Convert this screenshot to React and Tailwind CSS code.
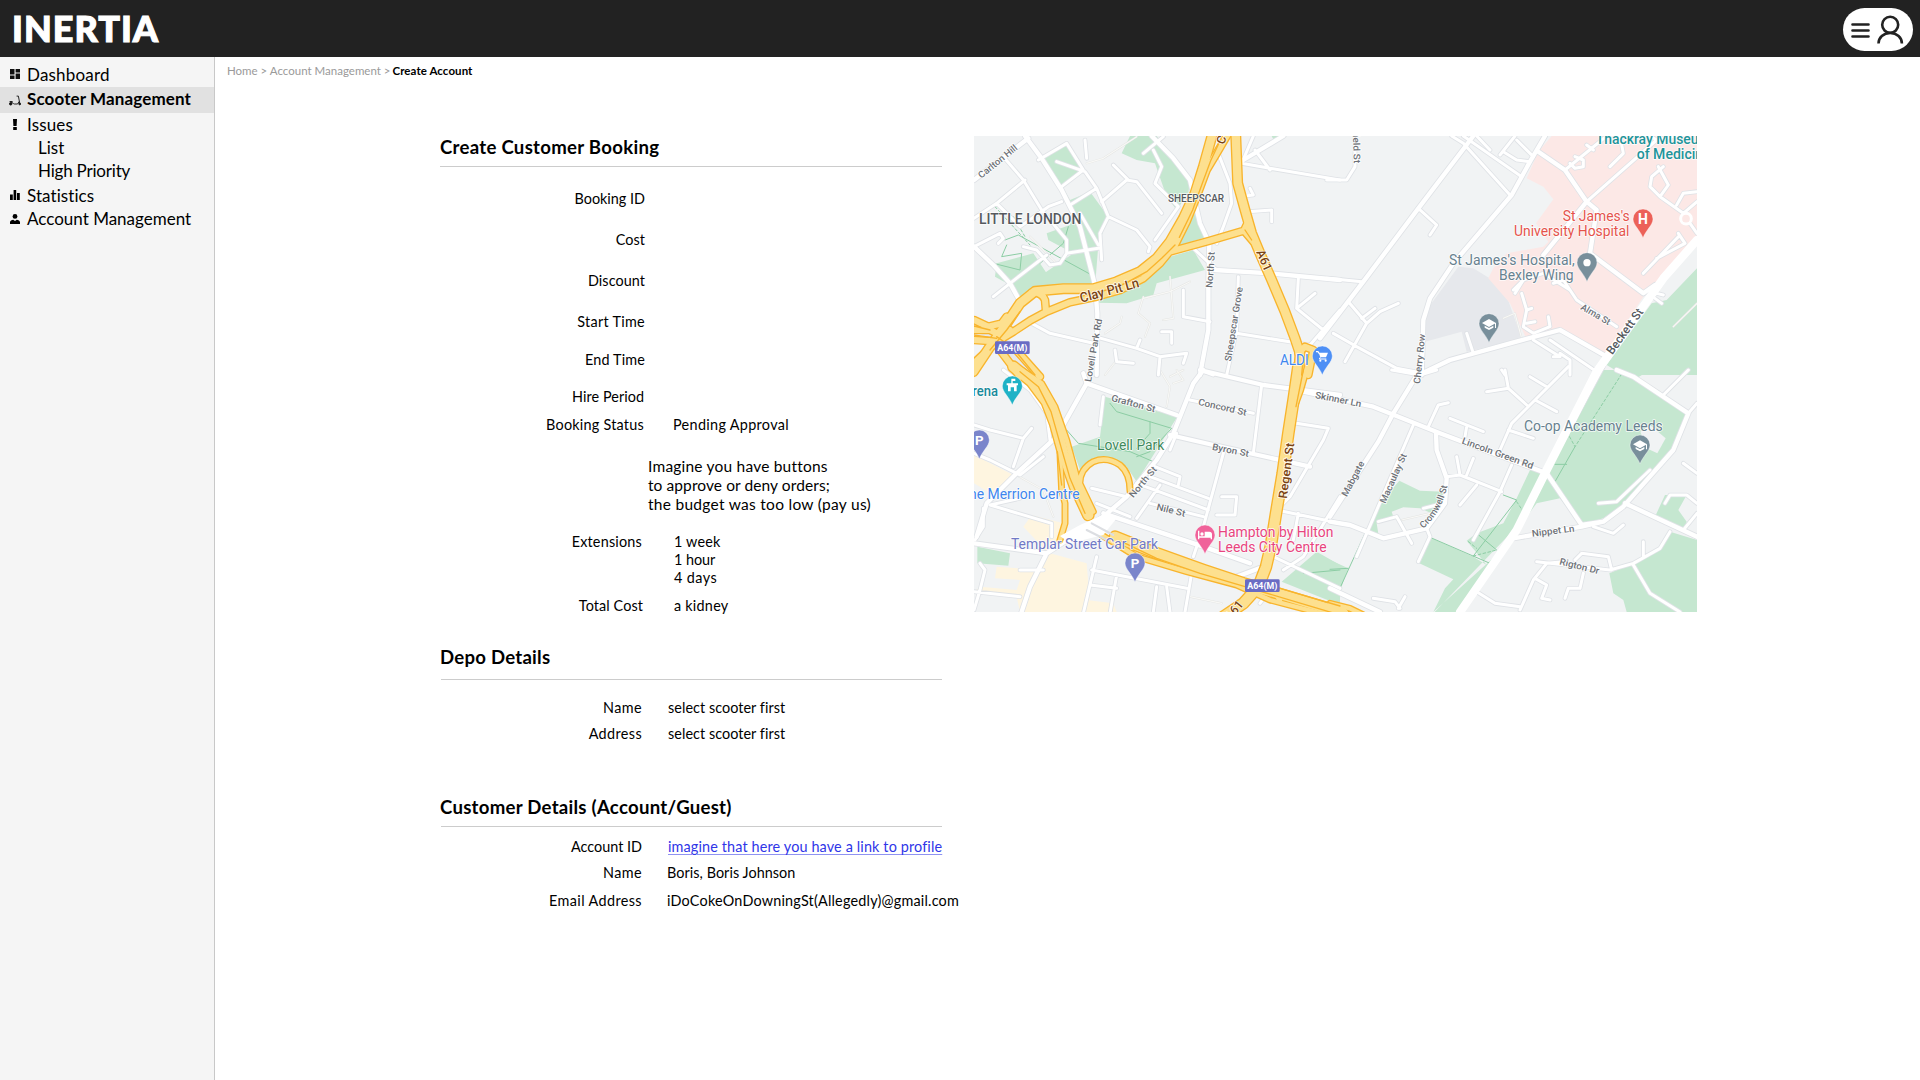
import React from "react";

const NAV_TEXT = "font-[Lato,sans-serif] text-[17px] leading-none text-black";

function DashboardIcon() {
  return (
    <svg viewBox="0 0 10 10" className="h-[10px] w-[10px]" fill="#111">
      <path d="M0 0h4.5v5.4H0zM0 6.4h4.5V10H0zM5.6 0H10v3.4H5.6zM5.6 4.5H10V10H5.6z" />
    </svg>
  );
}

function ScooterIcon() {
  return (
    <svg viewBox="0 0 12 11" className="h-[11px] w-[12px]" fill="none" stroke="#111">
      <path d="M7.6 1.1h1.8l1.3 7" strokeWidth="0.9" />
      <path d="M2 7.2c2 0 2 1.8 3.4 1.8h3.2l1.6-2.6" strokeWidth="0.9" />
      <circle cx="1.7" cy="8.8" r="1.2" fill="#111" />
      <circle cx="10.7" cy="8.9" r="0.9" fill="#111" />
      <path d="M0.6 6.6h3" strokeWidth="1" />
    </svg>
  );
}

function AlertIcon() {
  return (
    <svg viewBox="0 0 4 11" className="h-[11px] w-[4px]" fill="#000">
      <path d="M0 0h4l-.4 7H.4zM.2 8h3.6v3H.2z" />
    </svg>
  );
}

function StatsIcon() {
  return (
    <svg viewBox="0 0 10 10" className="h-[10px] w-[10px]" fill="#000">
      <path d="M0 4.4h2.8V10H0zM3.6 0h2.6v10H3.6zM7 3h2.8v7H7z" />
    </svg>
  );
}

function PersonIcon() {
  return (
    <svg viewBox="0 0 10 10" className="h-[10px] w-[10px]" fill="#000">
      <circle cx="5" cy="2.4" r="2.4" />
      <path d="M0 10V8.2C0 6.6 1.8 6 3.2 5.8L5 7l1.8-1.2C8.2 6 10 6.6 10 8.2V10z" />
    </svg>
  );
}

const nav = [
  { label: "Dashboard", icon: DashboardIcon, row: "h-[28px] pt-[2px]", text: "tracking-[0.2px]" },
  { label: "Scooter Management", icon: ScooterIcon, row: "h-[26px] bg-[#e1e1e1]", text: "pb-[3px] font-bold tracking-[0.12px]" },
  { label: "Issues", icon: AlertIcon, row: "h-[22px]", text: "tracking-[0.15px]" },
  { label: "List", row: "h-[23px] pt-[2px]", text: "ml-[13px]" },
  { label: "High Priority", row: "h-[23px] pt-[2px]", text: "ml-[13px] tracking-[-0.2px]" },
  { label: "Statistics", icon: StatsIcon, row: "h-[26px] pt-[2px]", text: "tracking-[0.08px]" },
  { label: "Account Management", icon: PersonIcon, row: "h-[21px] pt-[2px]", text: "" },
];

function Sidebar() {
  return (
    <nav className="w-[215px] shrink-0 border-r border-[#c8c8c8] bg-[#f5f5f5] pt-[2px]">
      {nav.map(({ label, icon: Icon, row, text }) => (
        <div key={label} className={`flex items-center ${row}`}>
          <span className="ml-[5px] flex w-[20px] shrink-0 justify-center">{Icon && <Icon />}</span>
          <span className={`ml-[2px] whitespace-nowrap ${NAV_TEXT} ${text}`}>{label}</span>
        </div>
      ))}
    </nav>
  );
}

function Header() {
  return (
    <header className="flex h-[57px] shrink-0 items-center justify-between bg-[#222222] pl-[12px] pr-[7px]">
      <span className="pb-[2px] font-[Lato,sans-serif] text-[36px] leading-none font-black tracking-[1px] text-white [-webkit-text-stroke:1.1px_white]">INERTIA</span>
      <div className="mt-[2px] flex h-[43px] w-[70px] items-center rounded-full bg-white pl-[8px]">
        <svg viewBox="0 0 53 30" className="h-[30px] w-[53px]" fill="none" stroke="#222">
          <path d="M1.5 9.500h16M1.5 15.500h16M1.5 21.500h16" strokeWidth="2.6" strokeLinecap="round" />
          <circle cx="39.2" cy="9.8" r="8" strokeWidth="2.6" />
          <path d="M27.5 28.6c0-6 5-10.6 11.7-10.6s11.7 4.6 11.7 10.6" strokeWidth="2.6" />
        </svg>
      </div>
    </header>
  );
}

function SectionTitle({ children, className }) {
  return <h2 className={`h-6 text-[18.6px] leading-[25px] font-bold whitespace-nowrap ${className}`}>{children}</h2>;
}

function Rule({ className }) {
  return <div className={`h-px bg-[#cccccc] ${className}`} />;
}

function Row({ label, children, top, labelWidth = "w-[202px]", labelText = "", gap = "ml-[26px]", value = "" }) {
  return (
    <div className={`flex text-[14.4px] ${top}`}>
      <span className={`shrink-0 text-right leading-5 whitespace-nowrap ${labelWidth} ${labelText}`}>{label}</span>
      {children && <span className={`whitespace-nowrap ${gap} ${value || "leading-5 tracking-[0.05px]"}`}>{children}</span>}
    </div>
  );
}

function BookingForm() {
  return (
    <section className="w-[502px] shrink-0 text-black">
      <SectionTitle className="tracking-[0.28px]">Create Customer Booking</SectionTitle>
      <Rule className="mt-[7px]" />
      <Row label="Booking ID" top="mt-[22px]" labelWidth="w-[205px]" />
      <Row label="Cost" top="mt-[21px]" labelWidth="w-[205px]" labelText="tracking-[0.07px]" />
      <Row label="Discount" top="mt-[21px]" labelWidth="w-[205px]" labelText="tracking-[0.07px]" />
      <Row label="Start Time" top="mt-[21px]" labelWidth="w-[205px]" labelText="tracking-[0.3px]" />
      <Row label="End Time" top="mt-[18px]" labelWidth="w-[205px]" labelText="tracking-[0.16px]" />
      <Row label="Hire Period" top="mt-[17px]" labelWidth="w-[204px]" labelText="tracking-[0.05px]" />
      <Row label="Booking Status" top="mt-[8px]" labelWidth="w-[204px]" labelText="tracking-[0.24px]" gap="ml-[29px]" value="leading-5 tracking-[0.33px]">
        Pending Approval
      </Row>
      <div className="mt-[22px] ml-[207px] text-[15.5px] leading-[19px] whitespace-nowrap">
        <p className="pl-px tracking-[0.21px]">Imagine you have buttons</p>
        <p className="pl-px tracking-[0.09px]">to approve or deny orders;</p>
        <p className="pl-px tracking-[0.28px]">the budget was too low (pay us)</p>
      </div>
      <Row label="Extensions" top="mt-[19px]" labelText="tracking-[0.2px] mt-[-1px]" gap="ml-[32px]" value="leading-[18px]">
        <span className="block tracking-[0.15px]">1 week</span>
        <span className="block tracking-[-0.05px]">1 hour</span>
        <span className="block tracking-[0.42px]">4 days</span>
      </Row>
      <Row label="Total Cost" top="mt-[9px]" labelWidth="w-[203px]" labelText="tracking-[0.1px]" gap="ml-[31px]" value="leading-5 tracking-[0.24px]">
        a kidney
      </Row>

      <SectionTitle className="mt-[29px] tracking-[0.24px]">Depo Details</SectionTitle>
      <Rule className="mt-[10px] ml-px" />
      <Row label="Name" top="mt-[18px]" labelText="tracking-[0.41px]">select scooter first</Row>
      <Row label="Address" top="mt-[6px]" labelText="tracking-[0.38px]">select scooter first</Row>

      <SectionTitle className="mt-[51px] tracking-[0.26px]">Customer Details (Account/Guest)</SectionTitle>
      <Rule className="mt-[7px] ml-px" />
      <Row label="Account ID" top="mt-[10px]" value="leading-5 tracking-[0.14px]">
        <a href="#profile" className="text-[#2f36e8] underline decoration-[#8f93f2] underline-offset-2">imagine that here you have a link to profile</a>
      </Row>
      <Row label="Name" top="mt-[6px]" labelText="tracking-[0.41px]" gap="ml-[25px]" value="leading-5 tracking-[0.06px]">
        Boris, Boris Johnson
      </Row>
      <Row label="Email Address" top="mt-[8px]" labelText="tracking-[0.39px]" gap="ml-[25px]" value="leading-5 tracking-[0.2px]">
        iDoCokeOnDowningSt(Allegedly)@gmail.com
      </Row>
    </section>
  );
}

/* Map geometry, one entry per quarter: north-west, north-east, south-west, south-east. */
const OFFSETS = ["translate(0 0)", "translate(1080 0)", "translate(0 720)", "translate(1080 720)"];

const GREEN = [
  "M215 85L290 40L345 120L270 175ZM275 165L300 210L360 185L415 260L385 345L375 470L140 500L125 465L215 435L310 370L235 330L230 310L300 285L310 240ZM80 400L190 370L230 430L130 470L75 440ZM480 18L560 18L660 150L655 190L620 240L590 200L555 100L500 90L455 70ZM670 245L710 320L620 350ZM600 380L670 360L705 420L560 460L550 495L470 520L375 518L400 490L520 450ZM905 18L950 18L915 38Z",
  "M1101 415L1010 510L965 520L830 705L880 735L1101 735Z",
  "M405 80L622 140L500 335L470 290L410 262L330 300L305 230L390 200ZM22 530L120 550L115 587L22 580ZM935 635L1040 545L1110 585L1110 705Z",
  "M815 0L960 0L920 25L1075 130L1025 240L880 405L820 445L750 465L690 385L620 400L590 440L310 730L395 726L560 500L310 726L345 655L370 628L268 580L298 502L430 560L470 585L410 512L440 490L520 460L560 385L600 300L650 310L725 150ZM208 332L270 362L345 365L330 400L310 432L270 415L220 412L185 425L190 440L140 460L148 510L110 490L150 400ZM1020 485L1101 510L1101 726L890 726L880 690L850 670L838 610L910 580L980 540ZM1005 375L1070 375L1045 420L1070 455L1060 485L975 440ZM0 570L55 595L20 690L0 690Z",
];

const PINK = [
  "",
  "M665 18L1101 18L1101 340L940 500L820 680L690 605L590 628L540 520L475 445L490 415L530 370L640 350L655 335L618 280L670 208L640 170L590 145L625 65Z",
  "",
  "",
];

const BEIGE = [
  "",
  "",
  "M12 255L130 315L70 375L12 340ZM185 435L280 460L270 510L235 550L160 470ZM80 590L210 600L240 550L350 580L360 700L345 726L150 726L140 680L12 665L30 650L140 660L150 630L75 625ZM270 680L430 700L440 726L270 726Z",
  "",
];

const GRAY = [
  "M12 560L90 600L220 735L150 735L100 680L12 590Z",
  "M385 410L430 415L520 470L575 625L410 665L395 605L285 635L290 540Z",
  "",
  "",
];

const MAJOR = [
  "M165 18L215 85L275 180L330 290L375 465L382 550L380 735M12 150L175 25M545 18L610 85L660 150L690 280L718 340L715 470L715 600L690 735M735 420L900 430L1110 450M820 90L940 18M12 350L70 405L120 460L145 505",
  "M1101 330L1000 445L800 725M645 18L600 95L545 195L370 400L300 505L280 570L275 735M430 18L265 235L100 455L-30 625M625 65L705 120L770 215L800 240L780 370L940 490L975 465M280 728L360 690L540 640L690 600L830 680M770 215L640 375",
  "M700 0L670 40L610 190L560 270L470 380L400 440L230 550L180 650L150 740M12 520L230 550M340 10L350 40L620 135M350 40L260 200L140 310L50 400L20 500M690 0L880 45L1110 75M600 195L730 225L1020 290M400 430L700 530L840 580M230 550L400 440M880 590L800 620",
  "M820 -15L650 300L560 480L390 726M-80 65L130 110L330 190L650 310L755 465L820 455L880 410L1030 240L1075 130L910 20L860 0M270 0L190 130L145 215L90 300L0 440M550 505L755 470L820 455M885 400L1101 500M0 455L60 465L160 505L290 475L345 400L350 325L320 240L318 190M0 655L150 726",
];

const LOCAL = [
  "M175 25L100 80L160 150L215 240L290 330L290 370L270 400L240 405L200 360L160 350M12 265L80 220L165 150M80 220L150 290L235 230L275 215M205 90L290 40L340 120L275 170M260 95L345 125L380 175L300 225M380 175L415 260L390 310L395 390M395 215L470 150L500 155L575 250M430 105L475 150M415 260L500 300L540 350L535 365M520 70L580 20M550 60L575 110L555 160L625 230L555 330M345 30L350 85M330 250L385 345M290 370L385 355M12 350L90 310L100 325L85 340M120 460L70 500M120 460L230 375M185 580L240 610L370 640M375 620L500 655L510 630M500 655L570 680L650 670L640 700M570 680L565 735M435 660L440 695L490 700M805 440L800 600L770 735M720 575L640 560L640 480M800 610L1020 645L1110 540M850 18L815 100L900 115L1110 150M855 60L900 120M805 200L850 195L840 175M835 245L905 240L905 275M745 70L780 160L785 220L760 290L740 340M740 420L670 355M985 445L980 535L1060 600M980 535L1035 490M575 605L605 605L605 640M690 720L730 735",
  "M-10 150L50 150L75 110L75 20M365 18L400 40L540 195M400 18L575 140M440 18L480 60M510 75L555 18M520 65L560 90L600 95M560 30L610 80M705 120L830 18M735 80L760 90L760 110L735 115L720 100M770 45L790 60M840 110L880 70L870 18M770 215L980 30L960 18M980 30L1040 18M985 110L1015 165L990 200L960 170L965 140L1000 110M990 200L1060 250M1040 225L1060 190L1101 185M1060 250L1101 215M1080 280L1101 310M1045 310L1065 340L980 385M1045 320L940 430M265 235L320 285L300 315M-10 445L95 455M55 515L110 580L45 695M95 565L135 535M110 580L150 545L205 520M10 610L80 650L200 715L280 730M410 610L430 670M550 480L580 450L640 430L720 480L740 510L860 590M580 450L555 490M575 490L590 540L580 590L610 610L660 590L655 560M590 540L605 535M590 580L615 575M670 460L700 450L720 480M660 630L800 725L830 680M610 630L690 680L670 680M690 670L720 690L720 735M980 490L1000 495M975 505L995 520M515 720L525 735",
  "M12 165L60 180L160 205L185 175M160 205L130 290M12 250L60 270L150 315L220 260M100 0L180 60L230 130L240 210M400 80L390 165M150 385L60 405L245 460L245 500M40 415L40 470L15 510M365 355L470 380M380 400L480 440M555 290L630 320L625 345M540 320L715 385M500 340L715 420M570 345L500 445M540 400L700 440M760 250L700 470L670 560M755 380L800 380L795 435L740 435M660 90L850 130M875 45L850 250M980 160L1075 175L1060 210L960 380L920 420L1110 460M1110 380L1000 560L940 600M985 430L970 510M900 555L1110 655M380 560L340 730M365 600L650 655M360 645L440 655M440 615L420 730M560 650L550 726M590 650L600 726M665 610L645 726M30 580L45 600L30 660L12 720M12 665L150 680M150 600L220 600M900 660L870 700M620 190L600 240",
  "M185 0L270 15L320 0M525 0L535 55L470 65M535 55L590 105M715 -10L545 160L510 240M600 20L650 50M615 90L680 125M535 180L610 205M545 285L510 365L430 510M350 320L390 315L515 365M390 315L380 260M410 315L430 265M440 345L390 405M295 170L325 105L355 98M360 145L460 185M410 170L405 200M250 165L110 490L80 560M290 475L300 500L265 575M200 440L245 520M145 455L200 440M280 415L320 405M805 400L860 395L960 300M1000 75L1075 0M1075 130L1101 100M1005 400L1020 375L1070 375L1101 400M1101 430L1060 480M1060 280L1101 310M790 470L850 490L880 465M1020 485L990 535L910 580L840 600L620 575M700 575L650 580L610 630L570 720M615 625L650 645L635 685L660 690M735 570L755 550L835 560L845 600M760 610L750 655L715 655L705 685M940 515L940 560M910 585L960 670L1050 726M440 665L495 700L570 710M130 685L195 695L210 715M225 680L205 715",
];

const THIN = [
  "M350 100L400 85L500 20M180 320L260 400M520 500L505 550L540 580L525 620M520 505L600 485L660 455M405 610L450 580L455 560M580 570L610 565L600 440M440 690L405 735M600 740L640 720",
  "M520 565L555 550L575 625M1030 590L1101 520",
  "M130 310L220 360L250 440M570 0L600 50L590 110M620 0L640 30L610 40M660 680L755 700",
  "M215 450L300 430M750 545L830 560",
];

const PATHS_GREEN = [
  "M105 330L145 315L365 435M110 345L95 380L155 370L150 420L70 400M295 290L280 340L210 400",
  "",
  "M290 180L325 220L480 245L550 275M420 100L440 125L605 175L540 245L500 260M540 155L540 190L500 235M1000 610L1110 600",
  "M735 230L675 335M675 283L710 283M300 502L480 580M430 558L560 390L520 375M440 490L500 540M105 490L25 665M0 598L55 595",
];

const PATHS_DASHED = ["M75 230L180 345M130 260L165 320", "", "", "M875 12L735 230L705 175M430 558L500 540M415 515L440 535M560 395L580 425"];

const YELLOW = [
  { w: 25, d: ["M728 10L700 110L675 190L640 265L600 335L560 385L510 425L440 455L370 476L280 476L195 484L150 520L110 580L60 650L10 725M797 10L803 160L825 240L845 310L870 370L905 450L945 545L975 625L990 670L985 740", "", "", ""] },
  { w: 18, d: ["M775 10L740 70L710 120L680 200L650 275L615 345L570 400L520 445L450 480L380 500L300 517L230 545L180 572L130 605L80 635L-5 715M600 365L720 332L822 302L835 275M822 302L850 335M185 488Q215 485 225 510L228 545M12 570L55 590L95 580L110 560M12 600L60 600L100 620M12 630L90 635L120 600M75 640L150 740M130 650L210 740M985 670L1005 650L1030 660L1015 735", "", "", ""] },
  { w: 30, d: ["", "", "M985 -10L972 80L955 190L938 310L918 430L902 530L888 590L865 650L820 700L760 740M130 -10L185 35L230 95L255 160L280 250L315 350L355 435M435 500L560 550L700 600L820 640L940 675L1120 730", ""] },
  { w: 13, d: ["", "", "M155 0L215 40L255 110L290 210L320 320L370 425M270 250L275 360L285 400L285 460L270 510M330 350Q325 300 370 275Q410 258 450 285Q480 310 480 362M395 495L500 560L650 605L800 645L900 690L1110 745M1012 -10L992 60L970 120M890 640L930 690", "M0 700L60 715L100 735"] },
];

const DIVIDERS = [
  "M757 18L722 92L697 160L668 240L628 322M615 345L575 385L530 425L470 458M150 545L110 600L60 660M825 300L845 330M80 620L130 655L195 735M12 588L60 600M12 615L80 625M1000 680L995 735",
  "",
  "M150 5L205 50L243 125L270 220L300 325L345 430M262 245L275 345M455 515L560 565L690 610L825 650L1110 735M998 10L978 110M1000 0L988 60M930 655L1110 708",
  "",
];

function Layer({ paths, ...rest }) {
  return (
    <g {...rest}>
      {paths.map((d, i) => d && <path key={i} d={d} transform={OFFSETS[i]} />)}
    </g>
  );
}

const STREET = { fill: "#6d7177", size: 28, weight: 500 };
const ROUTE = { fill: "#7a4312", size: 37, weight: 500 };
const STUDY = { fill: "#67818f", size: 43, weight: 400 };

/* text, x, y, angle, length, style */
const LABELS = [
  ["Carlton Hill", 34, 146, -39, 142, STREET],
  ["LITTLE LONDON", 27, 282, 0, 307, { fill: "#55595e", size: 44, weight: 500 }],
  ["SHEEPSCAR", 594, 216, 0, 168, { fill: "#55595e", size: 30, weight: 500 }],
  ["North St", 727, 474, -86, 108, STREET],
  ["A61", 858, 366, 66, 66, ROUTE],
  ["Clay Pit Ln", 334, 518, -15, 182, { ...ROUTE, size: 41 }],
  ["C", 762, 45, -70, 24, ROUTE],
  ["Sheepscar Grove", 783, 695, -81, 225, STREET],
  ["Lovell Park Rd", 363, 757, -80, 192, STREET],
  ["ALDI", 930, 705, 0, 86, { fill: "#3f86ee", size: 45, weight: 400 }],
  ["Enfield St", 1147, -30, 88, 130, STREET],
  ["Thackray Museum", 1877, 43, 0, 345, { fill: "#1f949a", size: 43, weight: 500 }],
  ["of Medicine", 2000, 88, 0, 222, { fill: "#1f949a", size: 43, weight: 500 }],
  ["St James's", 1778, 274, 0, 201, { fill: "#e5534b", size: 43, weight: 400 }],
  ["University Hospital", 1632, 319, 0, 346, { fill: "#e5534b", size: 43, weight: 400 }],
  ["St James's Hospital,", 1437, 405, 0, 377, STUDY],
  ["Bexley Wing", 1587, 451, 0, 224, STUDY],
  ["Alma St", 1830, 537, 30, 98, STREET],
  ["Beckett St", 1927, 676, -54, 160, { fill: "#55595e", size: 36, weight: 500 }],
  ["Cherry Row", 1350, 762, -84, 150, STREET],
  ["Arena", -19, 798, 0, 103, { fill: "#17899b", size: 43, weight: 500 }],
  ["The Merrion Centre", -28, 1107, 0, 357, { fill: "#3f86ee", size: 43, weight: 400 }],
  ["Grafton St", 422, 812, 15, 136, STREET],
  ["Concord St", 683, 824, 13, 148, STREET],
  ["Byron St", 725, 959, 11, 112, STREET],
  ["Nile St", 558, 1139, 14, 88, STREET],
  ["North St", 490, 1105, -50, 112, STREET],
  ["Lovell Park", 381, 960, 0, 202, { fill: "#3f8a5c", size: 43, weight: 400 }],
  ["Regent St", 950, 1107, -82, 168, { ...ROUTE, size: 36 }],
  ["Skinner Ln", 1034, 804, 11, 141, STREET],
  ["Templar Street Car Park", 123, 1257, 0, 441, { fill: "#7079c6", size: 43, weight: 400 }],
  ["Hampton by Hilton", 744, 1221, 0, 346, { fill: "#e8457f", size: 43, weight: 400 }],
  ["Leeds City Centre", 744, 1266, 0, 326, { fill: "#e8457f", size: 43, weight: 400 }],
  ["A61", 782, 1474, -51, 64, ROUTE],
  ["Co-op Academy Leeds", 1662, 903, 0, 416, STUDY],
  ["Lincoln Green Rd", 1474, 940, 20, 226, STREET],
  ["Mabgate", 1130, 1102, -62, 116, STREET],
  ["Macaulay St", 1246, 1122, -66, 160, STREET],
  ["Nippet Ln", 1687, 1220, -7, 128, STREET],
  ["Rigton Dr", 1767, 1303, 14, 122, STREET],
];

function MapLabel({ item }) {
  const [text, x, y, angle, length, s] = item;
  return (
    <text
      transform={`translate(${x} ${y}) rotate(${angle})`}
      textLength={length}
      lengthAdjust="spacingAndGlyphs"
      fontSize={s.size}
      fontWeight={s.weight}
      fill={s.fill}
    >
      {text}
    </text>
  );
}

function Pin({ x, y, color, children }) {
  return (
    <g transform={`translate(${x} ${y})`}>
      <path d="M-30 0A30 30 0 1 1 30 0C30 18 8 34 0 57C-8 34-30 18-30 0Z" fill={color} stroke="#ffffff" strokeOpacity="0.6" strokeWidth="2" />
      {children}
    </g>
  );
}

function Cap() {
  return (
    <g fill="#fff">
      <path d="M-21-2L0-14L21-2L0 10Z" />
      <path d="M-13 6V12L0 19L13 12V6L0 13Z" />
      <path d="M18-2h3V13h-3z" />
    </g>
  );
}

function PinLetter({ children, size = 36 }) {
  return (
    <text textAnchor="middle" y={size * 0.36} fontSize={size} fontWeight="700" fill="#fff">
      {children}
    </text>
  );
}

function RouteBadge({ x, y }) {
  return (
    <g transform={`translate(${x} ${y})`}>
      <rect width="104" height="38" rx="4" fill="#6a6cc4" />
      <text x="7" y="28" textLength="90" lengthAdjust="spacingAndGlyphs" fontSize="26" fontWeight="700" fill="#fff">
        A64(M)
      </text>
    </g>
  );
}

function CityMap() {
  return (
    <svg viewBox="12 18 2169 1428" className="block h-[476px] w-[723px] shrink-0 bg-[#f1f3f4] font-[Roboto,sans-serif]">
      <Layer paths={GRAY} fill="#e6e8ec" />
      <Layer paths={PINK} fill="#fce8e6" />
      <Layer paths={BEIGE} fill="#fef5e0" />
      <Layer paths={GREEN} fill="#c5e7d0" />
      <path d="M2011 905L2040 885L2087 925L2062 970L2030 955Z" fill="#f1f3f4" />
      <g fill="none" strokeLinejoin="round" strokeLinecap="round">
        <Layer paths={PATHS_GREEN} stroke="#8ccda4" strokeWidth="3" />
        <Layer paths={PATHS_DASHED} stroke="#8ccda4" strokeWidth="3" strokeDasharray="8 7" />
        <Layer paths={THIN} stroke="#e3e4e2" strokeWidth="6" />
        <Layer paths={THIN} stroke="#f8f8f6" strokeWidth="3.5" />
        <Layer paths={LOCAL} stroke="#dfe2e6" strokeWidth="14" />
        <Layer paths={MAJOR} stroke="#dfe2e6" strokeWidth="18" />
        <Layer paths={LOCAL} stroke="#ffffff" strokeWidth="9" />
        <Layer paths={MAJOR} stroke="#ffffff" strokeWidth="13" />
        <path d="M2181 330L2080 445L1880 725L1730 1020L1640 1200L1470 1446" stroke="#ffffff" strokeWidth="25" />
        <circle cx="2148" cy="266" r="16" stroke="#ffffff" strokeWidth="9" fill="#fce8e6" />
        {YELLOW.map(({ w, d }) => (
          <Layer key={w} paths={d} stroke="#f8b42c" strokeWidth={w + 8} />
        ))}
        {YELLOW.map(({ w, d }) => (
          <Layer key={w} paths={d} stroke="#fde08f" strokeWidth={w} />
        ))}
        <Layer paths={DIVIDERS} stroke="#f8b42c" strokeWidth="4" />
        <path d="M270 1218L330 1185L410 1150L440 1165L400 1215L300 1240Z" fill="#ffffff" />
        <path d="M365 1180L430 1215M350 1200L410 1230" stroke="#dcdee2" strokeWidth="6" />
      </g>
      <g stroke="#ffffff" strokeWidth="5" strokeOpacity="0.85" strokeLinejoin="round" paintOrder="stroke">
        {LABELS.map((item, i) => (
          <MapLabel key={i} item={item} />
        ))}
        <path id="cromwell" d="M1360 1196Q1418 1145 1434 1058" fill="none" stroke="none" />
        <text fontSize="28" fontWeight="500" fill="#6d7177">
          <textPath href="#cromwell" textLength="150">Cromwell St</textPath>
        </text>
      </g>
      <RouteBadge x={75} y={634} />
      <RouteBadge x={825} y={1348} />
      <Pin x={1057} y={678} color="#4d8ff5">
        <path d="M-19-13h6l3 5" fill="none" stroke="#fff" strokeWidth="3.5" />
        <path d="M-11-10h28l-6 14H-6z" fill="#fff" />
        <path d="M-6 4l-3 5h21" fill="none" stroke="#fff" strokeWidth="3" />
        <circle cx="-6" cy="14" r="3.2" fill="#fff" />
        <circle cx="10" cy="14" r="3.2" fill="#fff" />
      </Pin>
      <Pin x={2019} y={267} color="#ec6158">
        <PinLetter size={42}>H</PinLetter>
      </Pin>
      <Pin x={1851} y={398} color="#788f9b">
        <circle r="11" fill="#fff" />
      </Pin>
      <Pin x={1557} y={581} color="#788f9b">
        <Cap />
      </Pin>
      <Pin x={2010} y={945} color="#788f9b">
        <Cap />
      </Pin>
      <Pin x={127} y={768} color="#1fb2c6">
        <path d="M-17-8H-3V-22H9V-15H1V-8H17V-2H13V16H5V4H-5V16H-13V-2H-17Z" fill="#fff" />
      </Pin>
      <Pin x={28} y={930} color="#7a85cb">
        <PinLetter size={40}>P</PinLetter>
      </Pin>
      <Pin x={495} y={1299} color="#7a85cb">
        <PinLetter size={40}>P</PinLetter>
      </Pin>
      <Pin x={705} y={1215} color="#f0629a">
        <path d="M-21-13h4V4h16V-10H13q8 0 8 8V13h-4V8h-34v5h-4z" fill="#fff" />
        <circle cx="-9" cy="-3" r="5" fill="#fff" />
      </Pin>
    </svg>
  );
}

export default function App() {
  return (
    <div className="flex h-[1080px] w-[1920px] flex-col overflow-hidden bg-white font-[Lato,sans-serif]">
      <Header />
      <div className="flex flex-1">
        <Sidebar />
        <main className="flex flex-1 flex-col">
          <div className="mt-[7px] ml-[12px] flex h-[14px] text-[11.5px] leading-[14px] whitespace-nowrap">
            <span className="text-[#9a9a9a]">Home &gt; Account Management &gt;</span>
            <span className="ml-[2px] font-bold tracking-[0.08px] text-black">Create Account</span>
          </div>
          <div className="mt-[57px] ml-[225px] flex items-start">
            <BookingForm />
            <div className="mt-px ml-[32px]">
              <CityMap />
            </div>
          </div>
        </main>
      </div>
    </div>
  );
}
